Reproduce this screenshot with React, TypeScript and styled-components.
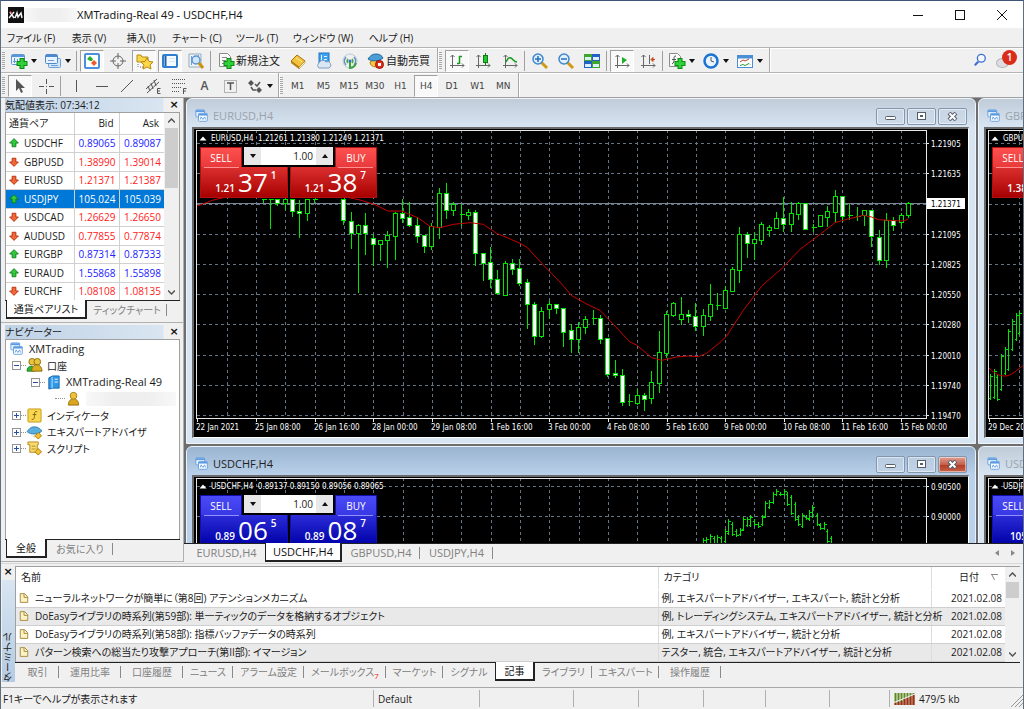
import React from "react";
import styled, { createGlobalStyle, css } from "styled-components";

const UI_FONT = `"Open Sans", "Noto Sans CJK JP", sans-serif`;
const CHART_FONT = `"DejaVu Sans Condensed", "DejaVu Sans", sans-serif`;

const Global = createGlobalStyle`
  *, *::before, *::after { box-sizing: border-box; }
  html, body { margin: 0; padding: 0; }
  body {
    font-family: ${UI_FONT};
    font-size: 10px;
    line-height: 16px;
    color: #1a1a1a;
    background: #f0f0f0;
    font-feature-settings: "palt";
    overflow: hidden;
  }
  button, input { font: inherit; color: inherit; font-feature-settings: inherit; }
  button { border: 0; padding: 0; background: none; white-space: nowrap; cursor: default; }
  ul { list-style: none; margin: 0; padding: 0; }
`;

/* ------------------------------------------------------------------ icons */

const ICONS: Record<string, React.ReactNode> = {
  newChart: (
    <>
      <rect x="0.500" y="1.500" width="13" height="10" rx="1" fill="#e8f3ff" stroke="#5b96d6" />
      <path d="M1 3h12" stroke="#5b96d6" strokeWidth="2" />
      <path d="M3.500 5v5M2 8.500h3M6.500 6v3" stroke="#5b96d6" />
      <path d="M11 5v11M5.500 10.500h11" stroke="#0b8a14" strokeWidth="5" />
      <path d="M11 6v9M6.500 10.500h9" stroke="#2fd03a" strokeWidth="3" />
    </>
  ),
  profiles: (
    <>
      <rect x="3.500" y="5.500" width="12" height="9" rx="1" fill="#d3e6fa" stroke="#6a9fd8" />
      <rect x="0.500" y="1.500" width="12" height="9" rx="1" fill="#e8f3ff" stroke="#4d8acb" />
      <path d="M1 3h11" stroke="#4d8acb" strokeWidth="2" />
      <path d="M3 7.500h6M6 12.500h7" stroke="#6a9fd8" />
    </>
  ),
  market: (
    <>
      <rect x="1" y="1" width="14" height="14" rx="1" fill="#fff" stroke="#4a90dc" strokeWidth="2" />
      <path d="M3 6l3-3 3 3-1 2H6z" fill="#22b12c" />
      <path d="M7 10l3-3 3 3-3 3z" fill="#ee5a28" />
    </>
  ),
  crosshair: (
    <g stroke="#666" fill="none">
      <circle cx="8" cy="8" r="5" />
      <path d="M8 0v6M8 10v6M0 8h6M10 8h6" />
    </g>
  ),
  navigator: (
    <>
      <path d="M1 2h4l1 2h6v5H1z" fill="#f7d74c" stroke="#b88a10" />
      <path d="M2 11v4M4 14h3" stroke="#777" strokeDasharray="1 1" />
      <path d="M11 5l2 3.500 4 .5-3 3 1 4-4-2-4 2 1-4-3-3 4-.5z" fill="#ffd84a" stroke="#b8860b" />
    </>
  ),
  terminal: (
    <>
      <rect x="1" y="2" width="14" height="12" rx="1" fill="#f5faff" stroke="#2f7fd0" strokeWidth="2" />
      <path d="M3.500 3v10" stroke="#1b5fae" strokeWidth="2" />
      <path d="M7 5.500h6M7 8.500h6" stroke="#d6e6f6" />
    </>
  ),
  tester: (
    <>
      <path d="M1 1h12v13H1z" fill="#eef3f8" stroke="#9ab" />
      <path d="M3.500 3v9M10.500 2v3" stroke="#6a9fd8" />
      <circle cx="8" cy="7" r="4" fill="#cfe6fb" stroke="#5c93cc" strokeWidth="1.500" />
      <path d="M11 10l4 5" stroke="#c9930d" strokeWidth="3" />
    </>
  ),
  order: (
    <>
      <path d="M1.500 .5h8l3 3v10h-11z" fill="#fafafa" stroke="#8c8c8c" />
      <path d="M4 4.500h5M4 7.500h4M4 10.500h3" stroke="#888" />
      <path d="M11 5v11M5.500 10.500h11" stroke="#0b8a14" strokeWidth="5" />
      <path d="M11 6v9M6.500 10.500h9" stroke="#2fd03a" strokeWidth="3" />
    </>
  ),
  book: (
    <>
      <path d="M1 8l6-6 8 6-6 6z" fill="#f3c23c" stroke="#a8720b" />
      <path d="M1 8l8 6v2L1 10z" fill="#b97c12" />
      <path d="M9 14l6-6v2l-6 6z" fill="#fff3c4" stroke="#a8720b" strokeWidth=".5" />
      <path d="M6 5l6 4" stroke="#fde79a" />
    </>
  ),
  cloud: (
    <>
      <rect x="3" y="0" width="10" height="10" fill="#3fa2f0" stroke="#1f73c4" />
      <path d="M5.500 2v6M8 3.500h3M8 6.500h3" stroke="#e3f3ff" />
      <path d="M3 15a3 3 0 010-5 4 4 0 017-1 3 3 0 013 6z" fill="#dce7f4" stroke="#7f9fc4" />
    </>
  ),
  signal: (
    <g fill="none">
      <circle cx="8" cy="8" r="7" stroke="#b9c9d8" />
      <path d="M4 12a6 6 0 010-8M12 4a6 6 0 010 8" stroke="#5f8fc0" strokeWidth="1.500" />
      <path d="M6 10a3 3 0 010-4M10 6a3 3 0 010 4" stroke="#4aa04f" strokeWidth="1.500" />
      <circle cx="8" cy="8" r="1.500" fill="#2a6fc0" />
      <path d="M8 9v6a7 7 0 006-5" stroke="#3aa342" strokeWidth="2" />
    </g>
  ),
  expert: (
    <>
      <path d="M2 9c0 6 10 7 12 0l-6-3z" fill="#f6c945" stroke="#b0830f" />
      <path d="M0 6c2-3 4-5 8-5s6 2 7 4c-3 3-11 4-15 1z" fill="#4a9ed6" stroke="#24679c" />
      <circle cx="11.500" cy="11.500" r="4" fill="#e02b17" stroke="#a01205" />
      <rect x="10" y="10" width="3" height="3" fill="#fff" />
    </>
  ),
  bars: (
    <g fill="none" stroke="#666">
      <path d="M3.500 2v13M1 12.500h14" />
      <path d="M1.500 4l2-2 2 2M13 10.500l2 2-2 2" />
      <path d="M10.500 3v8M10 3.500h3M8 10.500h2" stroke="#159a1c" strokeWidth="1.500" />
    </g>
  ),
  candles: (
    <g fill="none" stroke="#666">
      <path d="M3.500 2v13M1 12.500h14" />
      <path d="M1.500 4l2-2 2 2M13 10.500l2 2-2 2" />
      <path d="M10.500 0v12" stroke="#0c7d12" />
      <rect x="8.500" y="2.500" width="4" height="7" fill="#25c52e" stroke="#0c7d12" />
    </g>
  ),
  line: (
    <g fill="none" stroke="#666">
      <path d="M3.500 2v13M1 12.500h14" />
      <path d="M1.500 4l2-2 2 2M13 10.500l2 2-2 2" />
      <path d="M4 9c2-4 3-5 5-4s3 4 6 4" stroke="#159a1c" strokeWidth="1.500" />
    </g>
  ),
  zoomIn: (
    <>
      <path d="M9 9l6 6" stroke="#d19a15" strokeWidth="3" />
      <circle cx="6" cy="6" r="5" fill="#dff0ff" stroke="#3f86cf" strokeWidth="1.500" />
      <path d="M6 3v6M3 6h6" stroke="#2a6eb8" strokeWidth="1.500" />
    </>
  ),
  zoomOut: (
    <>
      <path d="M9 9l6 6" stroke="#d19a15" strokeWidth="3" />
      <circle cx="6" cy="6" r="5" fill="#dff0ff" stroke="#3f86cf" strokeWidth="1.500" />
      <path d="M3 6h6" stroke="#2a6eb8" strokeWidth="1.500" />
    </>
  ),
  tile: (
    <>
      <path d="M0 1h8v7H0zM8 8h8v7H8z" fill="#3fa52e" />
      <path d="M8 1h8v7H8zM0 8h8v7H0z" fill="#2361c4" />
      <path d="M1 4h6v3H1zM9 4h6v3H9zM1 11h6v3H1zM9 11h6v3H9z" fill="#dfeeff" />
    </>
  ),
  autoScroll: (
    <g fill="none" stroke="#666">
      <path d="M3.500 2v13M1 12.500h14" />
      <path d="M1.500 4l2-2 2 2M13 10.500l2 2-2 2" />
      <path d="M8 4l5 3-5 4z" fill="#1fae27" stroke="none" />
    </g>
  ),
  shift: (
    <g fill="none" stroke="#666">
      <path d="M3.500 2v13M1 12.500h14" />
      <path d="M1.500 4l2-2 2 2M13 10.500l2 2-2 2M9.500 2v9" />
      <path d="M15 6.500h-3M13 4.500l-2 2 2 2z" fill="#c8471d" stroke="#c8471d" />
    </g>
  ),
  indicator: (
    <>
      <path d="M.5 .5h8l3 3v10H.5z" fill="#fafafa" stroke="#8c8c8c" />
      <path d="M7 3c-2 0-2 1-2 3s0 4-2 5M3 6.500h4" fill="none" stroke="#555" />
      <path d="M11 5v11M5.500 10.500h11" stroke="#0b8a14" strokeWidth="5" />
      <path d="M11 6v9M6.500 10.500h9" stroke="#2fd03a" strokeWidth="3" />
    </>
  ),
  clock: (
    <>
      <circle cx="8" cy="8" r="6.500" fill="#e9f4ff" stroke="#1b74d2" strokeWidth="2.500" />
      <path d="M8 4v4l3 1" fill="none" stroke="#555" />
    </>
  ),
  template: (
    <>
      <rect x=".5" y="2.500" width="15" height="12" fill="#fff" stroke="#4a8fd6" />
      <path d="M1 4h14" stroke="#4a8fd6" strokeWidth="3" />
      <path d="M3 9l3-2 2 1 4-2" fill="none" stroke="#b5432c" />
      <path d="M3 12.500l3-1 2 1 4-2 1 1" fill="none" stroke="#2c9b38" />
    </>
  ),
  arrow: <path d="M4 1v12l3-3 2 5 2-1-2-4h4z" fill="#555" />,
  cross: <path d="M8.500 1v5M8.500 11v5M1 8.500h5M11 8.500h5M8 8.500h1" stroke="#555" />,
  vline: <path d="M8.500 2v12" stroke="#555" />,
  hline: <path d="M2 8.500h12" stroke="#555" />,
  trend: <path d="M2 14L14 2" stroke="#555" />,
  channel: (
    <g stroke="#555" fill="none">
      <path d="M1 11L12 1M2 15L14 4M3 8l2 5M6 5l2 6M9 2l2 6" />
      <path d="M15.500 10.500h-3v5h3M12 13h3" />
    </g>
  ),
  fibo: (
    <g stroke="#555" fill="none">
      <path d="M1 1.500h13M1 5.500h13M1 9.500h10M1 13.500h8" strokeDasharray="1 1" />
      <path d="M15.500 10.500h-3v5.500M12 13h3" />
    </g>
  ),
  textBox: (
    <>
      <rect x="2.500" y="2.500" width="12" height="12" fill="none" stroke="#777" strokeDasharray="1 1" />
      <path d="M5 5h7M8.500 5v7" stroke="#555" strokeWidth="1.500" />
    </>
  ),
  shapes: (
    <g fill="#555">
      <path d="M1 5l3-3 3 3-3 3zM9 12l3-3 3 3-3 3z" />
      <path d="M4 9l2 3 3 0M8 6l2 2 3-4" fill="none" stroke="#555" strokeWidth="1.500" />
    </g>
  ),
  search: (
    <>
      <path d="M6 10l-4 4" stroke="#3c6fd0" strokeWidth="2.500" />
      <circle cx="9.500" cy="6" r="4.500" fill="#f4f9ff" stroke="#3c6fd0" strokeWidth="1.500" />
    </>
  ),
  chartWindow: (
    <>
      <rect x="1" y="1" width="10" height="8" rx="1" fill="#eaf4ff" stroke="#5b9ae0" />
      <path d="M1 2.500h10" stroke="#5b9ae0" strokeWidth="2" />
      <rect x="4" y="5" width="10" height="9" rx="1" fill="#fff" stroke="#5b9ae0" />
      <path d="M4 6.500h10" stroke="#5b9ae0" strokeWidth="2" />
      <path d="M6 12l1-3 2 3 2-3 1 3" fill="none" stroke="#5b9ae0" />
    </>
  ),
  accounts: (
    <>
      <path d="M0 14c0-7 8-7 8 0z" fill="#30b336" stroke="#1c7d22" />
      <circle cx="5.500" cy="4" r="3.500" fill="#e8c441" stroke="#8f6c08" />
      <circle cx="11" cy="4" r="3.500" fill="#e8c441" stroke="#8f6c08" />
      <path d="M5 14c0-9 11-9 11 0z" fill="#d9ac22" stroke="#8f6c08" />
    </>
  ),
  server: (
    <>
      <path d="M3 3l4-2h7v13H7l-4 1z" fill="#2f97e8" stroke="#1668ae" />
      <path d="M6.500 2v12" stroke="#bfe2ff" />
      <path d="M9 4.500h4M9 7.500h4" stroke="#e6f5ff" />
    </>
  ),
  user: (
    <>
      <circle cx="8" cy="5" r="3.500" fill="#edc23a" stroke="#946d06" />
      <path d="M2.500 15c0-9 11-9 11 0z" fill="#d9a61c" stroke="#946d06" />
      <circle cx="8" cy="5" r="3" fill="#edc23a" />
    </>
  ),
  func: (
    <>
      <rect x="1" y="1" width="14" height="14" rx="1" fill="#f8d650" stroke="#c49a18" />
      <path d="M11 4c-3-1-3 1-3 4s-1 5-3 4M6 7h4" fill="none" stroke="#7a5a06" />
    </>
  ),
  advisor: (
    <>
      <path d="M0 7c2-2 3-5 8-5s6 3 8 4c-3 4-12 5-16 1z" fill="#58aede" stroke="#2a76ac" />
      <path d="M4 10c2 2 5 2 7 0l-3 4z" fill="#f0d9b0" />
      <path d="M12 8l3.500 3.500L12 15l-3.500-3.500z" fill="#f1c232" stroke="#a87a0c" />
    </>
  ),
  script: (
    <>
      <path d="M1 1h11v3h-1v8H3V4H1z" fill="#f8dc71" stroke="#b5881a" />
      <path d="M5 5.500h4M5 8.500h4" stroke="#b5881a" />
      <path d="M12 8l3.500 3.500L12 15l-3.500-3.500z" fill="#f1c232" stroke="#a87a0c" />
    </>
  ),
  up: <path d="M8 1l7 7-4 0v6H5V8H1z" fill="#32c83c" stroke="#0c7f18" strokeWidth="1.500" />,
  down: <path d="M8 15L1 8h4V2h6v6h4z" fill="#f0683a" stroke="#b8300c" strokeWidth="1.500" />,
  doc: (
    <>
      <path d="M2 1h7l5 5v9H2z" fill="#fbf3c8" stroke="#a8873a" strokeWidth="1.500" />
      <path d="M8 1v6h6" fill="none" stroke="#a8873a" strokeWidth="1.500" />
    </>
  ),
};

const IconSvg = styled.svg`
  display: block;
  flex: none;
  overflow: visible;
`;

function Icon({ name, size = 16 }: { name: string; size?: number }) {
  return (
    <IconSvg width={size} height={size} viewBox="0 0 16 16" aria-hidden="true">
      {ICONS[name]}
    </IconSvg>
  );
}

/* ------------------------------------------------------------------ frame */

const Frame = styled.div`
  display: flex;
  flex-direction: column;
  height: 100vh;
  border: 1px solid #5f6f7d;
  border-top-color: #3c5478;
  border-bottom: 0;
  background: #f0f0f0;
  overflow: hidden;
`;

const TitleBar = styled.header`
  display: flex;
  align-items: center;
  height: 27px;
  flex: none;
  background: #fff;
  padding-left: 7px;
`;

const Redacted = styled.span<{ $w: number }>`
  width: ${(p) => p.$w}px;
  height: 14px;
  background: linear-gradient(90deg, #f8f8f8, #efefef 30%, #efefef 70%, #f8f8f8);
`;

const TitleText = styled.h1`
  margin: 0;
  flex: 1;
  font-size: 11px;
  font-weight: 400;
  font-family: "Noto Sans", "Noto Sans CJK JP", sans-serif;
`;

const WindowButton = styled.button`
  width: 42px;
  height: 27px;
  display: grid;
  place-items: center;
`;

const MenuBar = styled.nav`
  display: flex;
  flex: none;
  height: 19px;
`;

const MenuItem = styled.button<{ $w: number }>`
  width: ${(p) => p.$w}px;
  line-height: 18px;
  text-align: center;
`;

const ToolRow = styled.div`
  display: flex;
  flex: none;
  height: 25px;
  border-top: 1px solid #b4b4b4;
  box-shadow: inset 0 1px #fff;
`;

const ToolBar = styled.div`
  display: flex;
  align-items: center;
  height: 25px;
  padding-right: 2px;
  border-right: 1px solid #a8a8a8;
  box-shadow: 1px 0 #fff;
`;

const Grip = styled.span`
  flex: none;
  width: 3px;
  height: 18px;
  margin: 0 2px 0 1px;
  background: repeating-linear-gradient(#a6a6a6 0 1px, #f4f4f4 1px 2px);
`;

const ToolDivider = styled.span`
  width: 1px;
  height: 20px;
  margin: 0 2px 0 1px;
  background: #a0a0a0;
`;

const ToolGroup = styled.div<{ $w: number }>`
  display: flex;
  width: ${(p) => p.$w}px;
`;

const ToolButton = styled.button<{ $pressed?: boolean }>`
  flex: 1;
  display: flex;
  align-items: center;
  justify-content: center;
  gap: 2px;
  height: 22px;
  margin: 0 1px;
  border: 1px solid transparent;
  font-size: 11px;
  color: #222;
  ${(p) =>
    p.$pressed &&
    css`
      background: #f9f9f9;
      border-color: #a0a0a0 #fff #fff #a0a0a0;
    `}
`;

const FrameLabel = styled.span`
  font-family: "DejaVu Sans", sans-serif;
  font-size: 9px;
  color: #444;
`;

const LetterTool = styled.span`
  font-weight: 600;
  font-size: 12px;
  color: #555;
`;

const Caret = styled.span`
  width: 0;
  height: 0;
  margin-left: 2px;
  border: 3px solid transparent;
  border-top: 4px solid #111;
  border-bottom: 0;
`;

const ToolEnd = styled.div`
  display: flex;
  align-items: center;
  gap: 8px;
  margin-left: auto;
  padding-right: 6px;
`;

const Bubble = styled.span`
  position: relative;
  width: 22px;
  height: 20px;
  &::before {
    content: "";
    position: absolute;
    left: 1px;
    bottom: 2px;
    width: 13px;
    height: 10px;
    border-radius: 50%;
    background: #dedee2;
    border: 1px solid #b4b4ba;
  }
`;

const Count = styled.b`
  position: absolute;
  top: 0;
  right: 0;
  width: 15px;
  height: 15px;
  border-radius: 50%;
  background: #da2c1b;
  color: #fff;
  font-size: 10px;
  line-height: 15px;
  font-weight: 600;
  text-align: center;
`;

/* ------------------------------------------------------------ dock panels */

const Workspace = styled.main`
  display: flex;
  flex: 1;
  min-height: 0;
  border-top: 1px solid #a0a0a0;
`;

const Dock = styled.aside`
  display: flex;
  flex-direction: column;
  width: 183px;
  flex: none;
  gap: 2px;
  border-right: 1px solid #b0b0b0;
`;

const Panel = styled.section<{ $grow?: boolean }>`
  display: flex;
  flex-direction: column;
  min-height: 0;
  padding: 0 3px 2px 4px;
  border-bottom: 1px solid #b0b0b0;
  flex: ${(p) => (p.$grow ? "1" : "none")};
`;

const PanelTitle = styled.h2`
  display: flex;
  justify-content: space-between;
  align-items: center;
  margin: 0;
  height: 14px;
  font-size: 10px;
  line-height: 14px;
  font-weight: 400;
  background: linear-gradient(90deg, #bfd2e6, #d9e5f1 90%, #f0f0f0 91%);
`;

const CloseMark = styled.button`
  width: 12px;
  height: 12px;
  font: 700 11px/10px "DejaVu Sans", sans-serif;
  color: #111;
`;

const PanelBody = styled.div<{ $h?: number }>`
  display: flex;
  align-items: flex-start;
  overflow: hidden;
  background: #fff;
  border: 1px solid #a0a0a0;
  border-bottom: 0;
  ${(p) => (p.$h ? `height: ${p.$h}px;` : "flex: 1;")}
`;

const Scroll = styled.div`
  display: flex;
  flex-direction: column;
  align-items: center;
  align-self: stretch;
  justify-content: space-between;
  flex: none;
  width: 15px;
  background: #f0f0f0;
`;

const Thumb = styled.span<{ $h: number }>`
  width: 13px;
  height: ${(p) => p.$h}px;
  margin-bottom: auto;
  background: #cdcdcd;
`;

const ScrollArrow = styled.button`
  display: grid;
  place-items: center;
  width: 15px;
  height: 15px;
`;

const QuoteTable = styled.table`
  flex: 1;
  height: 100%;
  border-collapse: collapse;
  table-layout: fixed;
  th, td {
    padding: 0 3px 0 0;
    border: solid #d0d0d0;
    border-width: 0 0 1px 1px;
    text-align: right;
    font-weight: 400;
    overflow: hidden;
    white-space: nowrap;
    line-height: 16px;
  }
  th { height: 21px; padding-right: 5px; }
  th:first-child, td:first-child { text-align: left; border-left: 0; padding: 0 0 0 3px; }
  tr:last-child td { border-bottom: 0; }
`;

const QuoteRow = styled.tr<{ $up: boolean; $sel?: boolean }>`
  td { color: ${(p) => (p.$up ? "#2020ff" : "#ff2020")}; }
  td:first-child { color: #1a1a1a; }
  ${(p) =>
    p.$sel &&
    css`
      background: #0078d7;
      td, td:first-child { color: #fff; }
    `}
`;

const Pair = styled.span`
  display: flex;
  align-items: center;
  gap: 5px;
`;

const TabStrip = styled.div`
  display: flex;
  flex: none;
  height: 20px;
  padding-left: 1px;
  border-top: 1px solid #222;
`;

const Tab = styled.button<{ $w: number; $active?: boolean; $plain?: boolean }>`
  position: relative;
  width: ${(p) => p.$w}px;
  height: 18px;
  line-height: 16px;
  color: #808080;
  ${(p) =>
    p.$active
      ? css`
          margin-top: -1px;
          height: 19px;
          color: #111;
          background: #fff;
          border: solid #222;
          border-width: 0 2px 2px 1px;
        `
      : !p.$plain &&
        css`
          &::after {
            content: "";
            position: absolute;
            right: 0;
            top: 3px;
            height: 12px;
            border-right: 1px solid #8a8a8a;
          }
        `}
`;

const Tree = styled.ul`
  display: grid;
  grid-template-rows: repeat(7, 1fr);
  height: 117px;
  flex: 1;
  padding: 1px 0 0 3px;
`;

const TreeRow = styled.li<{ $depth: number }>`
  display: flex;
  align-items: center;
  gap: 5px;
  margin-left: ${(p) => p.$depth}px;
  white-space: nowrap;
`;

const TreeLink = styled.span<{ $w: number }>`
  width: ${(p) => p.$w}px;
  margin-right: -4px;
  height: 1px;
  border-top: 1px dotted #909090;
`;

const Expander = styled.button`
  display: grid;
  place-items: center;
  width: 9px;
  height: 9px;
  margin-right: -5px;
  border: 1px solid #949494;
  background: #fff;
`;

const TreeName = styled.span<{ $latin: boolean }>`
  display: flex;
  font-size: ${(p) => (p.$latin ? 11 : 10)}px;
`;

/* ------------------------------------------------------------ MDI windows */

const ChartArea = styled.div`
  display: flex;
  flex-direction: column;
  flex: 1;
  min-width: 0;
`;

const Desktop = styled.div`
  flex: 1;
  min-height: 0;
  overflow: hidden;
  display: grid;
  grid-template-columns: max-content max-content;
  align-content: start;
  gap: 2px;
  padding-left: 1px;
  border-left: 1px solid #6e6e6e;
  background: #6e6e6e;
`;

const MdiWindow = styled.section<{ $active?: boolean }>`
  padding: 0 6px 5px 5px;
  border: 1px solid ${(p) => (p.$active ? "#e8f2fb" : "#eef4fa")};
  border-radius: 6px 6px 0 0;
  background: ${(p) =>
    p.$active
      ? "linear-gradient(#9ab3cf, #b9d1ea 28px, #b9d1ea)"
      : "linear-gradient(#c0ccd8, #d7e4f2 28px, #d7e4f2)"};
`;

const MdiTitle = styled.header<{ $active?: boolean }>`
  display: flex;
  align-items: center;
  gap: 4px;
  height: 28px;
  padding: 6px 0 0 3px;
  font-size: 11px;
  color: ${(p) => (p.$active ? "#222" : "#9aa3ac")};
`;

const MdiName = styled.h3`
  flex: 1;
  margin: 0;
  font: inherit;
`;

const MdiButtons = styled.div`
  display: flex;
  gap: 2px;
  margin-right: 2px;
`;

const MdiButton = styled.button<{ $red?: boolean }>`
  display: grid;
  place-items: center;
  width: 29px;
  height: 17px;
  border: 1px solid #8296ae;
  border-radius: 2px;
  box-shadow: inset 0 0 0 1px rgba(255, 255, 255, 0.5);
  background: ${(p) => (p.$red ? "linear-gradient(#e0a193, #c4604c 50%, #b23a22 51%, #c9614a)" : "rgba(200, 214, 229, 0.6)")};
`;

const ChartPane = styled.div`
  position: relative;
  border: solid;
  border-width: 2px 1px 1px 2px;
  border-color: #6a6a6a #fff #fff #6a6a6a;
  background: #000;
`;

const ChartSvg = styled.svg`
  display: block;
  text { font-family: ${CHART_FONT}; font-size: 8px; fill: #fff; }
  text.inverse { fill: #000; }
`;

/* one-click trading panel lying over the chart */
const DealPanel = styled.div`
  position: absolute;
  left: 6px;
  top: 18px;
  width: 177px;
  display: grid;
  grid-template-columns: 42px 1fr 42px;
  background: #000;
`;

const dealFill = {
  red: { top: "linear-gradient(#ff5050, #e83a3a)", bottom: "linear-gradient(#dc3030, #a80000)", edge: "#b01010", rule: "#ff9090" },
  blue: { top: "linear-gradient(#4a4af6, #3838e4)", bottom: "linear-gradient(#2c2cd8, #0000a8)", edge: "#1010b0", rule: "#9090ff" },
};
type Tone = keyof typeof dealFill;

const DealSide = styled.button<{ $tone: Tone }>`
  height: 20px;
  line-height: 16px;
  color: #fff;
  border: solid ${(p) => dealFill[p.$tone].edge};
  border-width: 1px 1px 0;
  background: ${(p) => dealFill[p.$tone].top};
`;

const Volume = styled.label`
  display: flex;
  align-items: stretch;
  height: 18px;
  margin: 0 2px;
  background: #fff;
`;

const VolumeInput = styled.input`
  flex: 1;
  min-width: 0;
  width: 0;
  border: 0;
  padding: 0 3px;
  text-align: right;
  color: #222;
  background: #fff;
  outline: 0;
`;

const Stepper = styled.button`
  display: grid;
  place-items: center;
  width: 17px;
  background: #e8e8e8;
`;

const Prices = styled.div`
  grid-column: 1 / -1;
  display: grid;
  grid-template-columns: 1fr 1fr;
  gap: 2px;
`;

const Price = styled.button<{ $tone: Tone }>`
  position: relative;
  display: flex;
  justify-content: flex-end;
  align-items: baseline;
  gap: 3px;
  height: 31px;
  padding-right: 10px;
  color: #fff;
  border: solid ${(p) => dealFill[p.$tone].edge};
  border-width: 0 1px 1px;
  background: ${(p) => dealFill[p.$tone].bottom};
  &::before {
    content: "";
    position: absolute;
    top: 0;
    left: 3px;
    width: 35px;
    border-top: 1px solid ${(p) => dealFill[p.$tone].rule};
  }
  &:last-child::before { left: auto; right: 3px; }
  small { font-size: 10px; font-weight: 600; }
  strong { font-size: 26px; line-height: 30px; font-weight: 400; }
  sup { font-size: 10px; line-height: 10px; font-weight: 600; align-self: flex-start; margin-top: 3px; }
`;

/* ---------------------------------------------------------------- charting */

const PLOT = { w: 774, h: 308, left: 3, top: 1, right: 732, bottom: 289 };
const GRID_X = Array.from({ length: 24 }, (_, i) => Math.round(32.7 + i * 29.32));

// [bar index, high, low, body top, body bottom, falling?]; heights in thirds of a pixel
type Candle = [number, number, number, number, number, number];
const EURUSD: Candle[] = [
  [-27, 310, 317, 310, 310, 0], [-26, 310, 396, 310, 310, 0], [-25, 310, 326, 310, 320, 1], [-24, 310, 338, 310, 322, 0],
  [-23, 310, 360, 310, 346, 1], [-22, 310, 423, 344, 350, 1], [-21, 310, 372, 310, 352, 0], [-20, 310, 317, 310, 310, 0],
  [-16, 310, 384, 310, 373, 1], [-15, 345, 456, 375, 412, 1], [-14, 382, 588, 388, 412, 0], [-13, 349, 473, 388, 410, 1],
  [-12, 412, 508, 427, 445, 1], [-11, 431, 491, 431, 444, 0], [-10, 402, 514, 418, 431, 0], [-9, 346, 489, 352, 419, 0],
  [-8, 305, 377, 352, 365, 1], [-7, 314, 390, 363, 388, 1], [-6, 359, 437, 386, 419, 1], [-5, 418, 467, 418, 451, 1],
  [-4, 378, 459, 391, 451, 0], [-3, 273, 425, 292, 392, 0], [-2, 259, 366, 292, 341, 1], [-1, 316, 357, 324, 341, 0],
  [0, 322, 387, 355, 355, 0], [1, 335, 369, 348, 357, 0], [2, 339, 506, 347, 470, 1], [3, 468, 552, 471, 500, 1],
  [4, 449, 574, 499, 548, 1], [5, 519, 594, 550, 591, 1], [6, 492, 596, 502, 596, 0], [7, 486, 534, 502, 518, 1],
  [8, 486, 568, 517, 560, 1], [9, 547, 696, 557, 623, 1], [10, 615, 745, 623, 719, 1], [11, 629, 724, 645, 720, 0],
  [12, 613, 667, 625, 640, 0], [13, 621, 652, 625, 636, 1], [14, 634, 750, 637, 708, 1], [15, 682, 767, 702, 729, 1],
  [16, 675, 769, 693, 728, 0], [17, 657, 712, 669, 692, 0], [18, 639, 684, 666, 666, 0], [19, 654, 741, 666, 728, 1],
  [20, 725, 839, 727, 833, 1], [21, 790, 842, 831, 837, 1], [22, 816, 927, 836, 917, 1], [23, 892, 927, 916, 916, 0],
  [24, 877, 923, 897, 921, 0], [25, 889, 942, 897, 908, 1], [26, 822, 921, 859, 907, 0], [27, 701, 888, 768, 862, 0],
  [28, 641, 784, 655, 772, 0], [29, 614, 659, 622, 656, 0], [30, 600, 684, 655, 670, 0], [31, 639, 678, 655, 661, 1],
  [32, 618, 703, 660, 689, 1], [33, 635, 717, 658, 689, 0], [34, 561, 673, 625, 659, 0], [35, 588, 638, 626, 626, 0],
  [36, 568, 637, 583, 635, 0], [37, 510, 585, 520, 585, 0], [38, 391, 557, 415, 521, 0], [39, 406, 484, 414, 442, 1],
  [40, 404, 488, 430, 442, 0], [41, 374, 443, 383, 431, 0], [42, 383, 419, 394, 402, 0], [43, 346, 395, 367, 395, 0],
  [44, 301, 404, 367, 384, 1], [45, 314, 404, 352, 384, 0], [46, 316, 370, 320, 353, 0], [47, 320, 398, 320, 398, 1],
  [48, 381, 404, 392, 392, 0], [49, 354, 391, 358, 391, 0], [50, 327, 391, 346, 362, 0], [51, 280, 378, 301, 349, 0],
  [52, 297, 376, 300, 360, 1], [53, 322, 370, 357, 357, 0], [54, 330, 371, 359, 359, 0], [55, 341, 388, 343, 358, 0],
  [56, 340, 450, 342, 419, 1], [57, 400, 503, 422, 491, 1], [58, 349, 512, 371, 491, 0], [59, 360, 403, 371, 386, 1],
  [60, 349, 392, 358, 379, 0], [61, 316, 362, 320, 358, 0],
];

const EUR_MA: [number, number][] = [
  [37, 330], [85, 312], [180, 290], [420, 290], [525, 312], [570, 326], [608, 345], [650, 345], [700, 366], [735, 391],
  [765, 395], [805, 385], [855, 380], [895, 385], [935, 412], [980, 431], [1005, 442], [1027, 455], [1075, 507],
  [1125, 558], [1160, 599], [1205, 624], [1245, 643], [1285, 685], [1335, 738], [1355, 747], [1400, 785], [1430, 793],
  [1475, 783], [1510, 780], [1540, 782], [1565, 772], [1605, 739], [1625, 720], [1675, 643], [1730, 570], [1790, 518],
  [1845, 460], [1895, 423], [1950, 380], [1985, 370], [2035, 358], [2060, 363], [2080, 371], [2145, 375], [2160, 374], [2170, 368],
];

// [x, high, low] of each bar, in thirds of a pixel
const USDCHF: [number, number, number][] = [
  [188, 413, 440], [199, 410, 440], [210, 401, 440], [221, 408, 440], [232, 406, 440], [243, 407, 440], [255, 388, 430],
  [265, 358, 404], [276, 367, 407], [287, 387, 411], [299, 385, 408], [310, 352, 392], [321, 350, 381], [331, 344, 382],
  [343, 357, 379], [354, 365, 383], [365, 345, 377], [376, 302, 354], [386, 299, 326], [398, 275, 312], [409, 267, 289],
  [420, 276, 289], [431, 268, 288], [442, 275, 318], [453, 284, 344], [464, 306, 363], [475, 345, 377], [486, 340, 384],
  [497, 344, 359], [508, 330, 364], [517, 315, 355], [530, 338, 379], [540, 368, 390], [551, 366, 391], [562, 386, 430],
  [574, 408, 440],
];

// [x, high, low] in pixels
const GBPUSD: [number, number, number][] = [
  [4, 245, 271], [8, 240, 270], [11, 246, 272], [15, 225, 262], [19, 218, 246], [22, 200, 242], [26, 190, 222],
  [30, 184, 212], [33, 182, 206],
];

const GREEN = "#00e600";

function CandleSeries() {
  return (
    <g stroke={GREEN} shapeRendering="crispEdges">
      {EURUSD.map(([k, hi, lo, top, bottom, falling]) => {
        const x = Math.round(266.8 + k * 7.333) + 0.5;
        const y = (v: number) => Math.round(v / 3 - 33) + 0.5;
        const body = y(bottom) - y(top);
        return (
          <g key={k}>
            <path d={`M${x} ${y(hi)}V${y(lo)}`} />
            {body > 0 ? (
              <rect x={x - 2} y={y(top)} width={4} height={body} fill={falling ? "#fff" : "#000"} />
            ) : (
              <path d={`M${x - 2} ${y(top)}h5`} />
            )}
          </g>
        );
      })}
    </g>
  );
}

function BarSeries({ bars }: { bars: [number, number, number][] }) {
  return (
    <g stroke={GREEN} shapeRendering="crispEdges">
      {bars.map(([x, hi, lo], i) => {
        const px = Math.round(x) + 0.5;
        const up = i === 0 || hi < bars[i - 1][1];
        const open = Math.round(up ? lo - 2 : hi + 2) + 0.5;
        const close = Math.round(up ? hi + 2 : lo - 2) + 0.5;
        return <path key={x} d={`M${px} ${hi}V${lo}M${px - 2} ${open}h2M${px} ${close}h2`} />;
      })}
    </g>
  );
}

type ChartProps = {
  header: string;
  gridTop: number;
  prices: string[];
  dates: string[];
  current?: { y: number; text: string };
  children?: React.ReactNode;
};

function Chart({ header, gridTop, prices, dates, current, children }: ChartProps) {
  const rows = Array.from({ length: 10 }, (_, i) => Math.round(gridTop + i * 30.2) + 0.5).filter((y) => y < PLOT.bottom);
  return (
    <ChartSvg width={PLOT.w} height={PLOT.h} viewBox={`0 0 ${PLOT.w} ${PLOT.h}`} role="img" aria-label={header}>
      <g stroke="#647484" strokeDasharray="3 3" shapeRendering="crispEdges">
        {GRID_X.map((x) => (
          <path key={x} d={`M${x + 0.5} ${PLOT.top}V${PLOT.bottom}`} />
        ))}
        {rows.map((y) => (
          <path key={y} d={`M${PLOT.left} ${y}H${PLOT.right}`} />
        ))}
      </g>
      {current && <path d={`M${PLOT.left} ${current.y}.5H${PLOT.right}`} stroke="#778899" />}
      {children}
      <g fill="none" stroke="#e8e8e8" shapeRendering="crispEdges">
        <path d={`M${PLOT.left - 0.5} ${PLOT.bottom + 0.5}V${PLOT.top + 0.5}H${PLOT.right + 0.5}V${PLOT.bottom + 0.5}Z`} />
        {dates.map((d, i) => (
          <path key={d} d={`M${i ? GRID_X[i * 2 - 1] + 0.5 : 3.5} ${PLOT.bottom}v4`} />
        ))}
        {rows.map((y) => (
          <path key={y} d={`M${PLOT.right} ${y}h3`} />
        ))}
      </g>
      <path d="M5.500 11.500h7l-3.500-4z" fill="#fff" />
      <text x="17" y="12" xmlSpace="preserve">{header}</text>
      {dates.map((d, i) => (
        <text key={d} x={i ? GRID_X[i * 2 - 1] - 1 : 2} y="301">{d}</text>
      ))}
      {prices.map((p, i) => p && <text key={p} x="737" y={rows[i] + 3}>{p}</text>)}
      {current && (
        <>
          <rect x="733" y={current.y - 5} width="38" height="11" fill="#fff" />
          <text className="inverse" x="737" y={current.y + 4}>{current.text}</text>
        </>
      )}
    </ChartSvg>
  );
}

type Quote = [string, string, string];
type WindowProps = { name: string; active?: boolean; tone: Tone; sell: Quote; buy: Quote; children: React.ReactNode };

function ChartWindow({ name, active, tone, sell, buy, children }: WindowProps) {
  return (
    <MdiWindow $active={active}>
      <MdiTitle $active={active}>
        <Icon name="chartWindow" size={14} />
        <MdiName>{name}</MdiName>
        <MdiButtons>
          <MdiButton aria-label="最小化">
            <svg width="11" height="9"><rect x=".5" y="4.500" width="10" height="3" rx="1" fill="#fff" stroke="#555d68" /></svg>
          </MdiButton>
          <MdiButton aria-label="最大化">
            <svg width="11" height="9"><rect x="1.500" y=".5" width="8" height="7" fill="#fff" stroke="#555d68" /><rect x="4" y="3" width="3" height="2" fill="#555d68" /></svg>
          </MdiButton>
          <MdiButton aria-label="閉じる" $red={active}>
            <svg width="11" height="9"><path d="M2 1l7 7M9 1L2 8" stroke="#555d68" strokeWidth="4" /><path d="M2.500 1.500l6 6M8.500 1.500l-6 6" stroke="#fff" strokeWidth="2" /></svg>
          </MdiButton>
        </MdiButtons>
      </MdiTitle>
      <ChartPane>
        {children}
        <DealPanel>
          <DealSide $tone={tone}>SELL</DealSide>
          <Volume>
            <Stepper aria-label="減らす"><svg width="6" height="4"><path d="M0 0h6L3 4z" fill="#111" /></svg></Stepper>
            <VolumeInput aria-label="数量" defaultValue="1.00" />
            <Stepper aria-label="増やす"><svg width="6" height="4"><path d="M0 4h6L3 0z" fill="#111" /></svg></Stepper>
          </Volume>
          <DealSide $tone={tone}>BUY</DealSide>
          <Prices>
            {[sell, buy].map(([a, b, c]) => (
              <Price key={b} $tone={tone}><small>{a}</small><strong>{b}</strong><sup>{c}</sup></Price>
            ))}
          </Prices>
        </DealPanel>
      </ChartPane>
    </MdiWindow>
  );
}

const DocTabs = styled(TabStrip)`
  height: 19px;
  padding-left: 4px;
  border-top-color: #222;
  font-size: 11px;
`;

const DocScroll = styled.div`
  display: flex;
  gap: 12px;
  align-items: center;
  margin-left: auto;
  padding-right: 8px;
`;

/* ---------------------------------------------------------------- terminal */

const Terminal = styled.section`
  display: flex;
  flex: none;
  margin-top: 1px;
  padding: 2px 3px 5px 0;
  border-top: 1px solid #d8d8d8;
`;

const Spine = styled.header`
  display: flex;
  flex-direction: column;
  align-items: center;
  width: 14px;
  gap: 2px;
`;

const SpineTitle = styled.h2`
  flex: 1;
  width: 13px;
  margin: 0;
  writing-mode: vertical-rl;
  transform: rotate(180deg);
  font-size: 10px;
  line-height: 13px;
  font-weight: 400;
  background: linear-gradient(#b4cbe2, #d9e5f1);
`;

const TerminalBody = styled.div`
  flex: 1;
  min-width: 0;
`;

const ListBox = styled.div`
  display: flex;
  align-items: flex-start;
  background: #fff;
  border: solid #a0a0a0;
  border-width: 1px 0 0 1px;
  height: 96px;
  overflow: hidden;
`;

const Articles = styled.table`
  flex: 1;
  width: 100%;
  min-width: 0;
  border-collapse: collapse;
  table-layout: fixed;
  th, td {
    height: 18px;
    padding: 0 3px;
    border: solid #dcdcdc;
    border-width: 0 0 1px 1px;
    text-align: left;
    font-weight: 400;
    line-height: 17px;
    white-space: nowrap;
  }
  th { height: 22px; border-bottom-color: #fff; padding-left: 5px; }
  th:first-child, td:first-child { border-left: 0; }
  th:last-child, td:last-child { text-align: right; }
  tbody tr:nth-child(even) { background: #e9e9e9; }
  td { border-bottom-color: #cfcfcf; }
`;

const Doc = styled.span`
  display: flex;
  align-items: center;
  gap: 6px;
`;

const SortMark = styled.svg`
  margin: 0 4px 0 12px;
`;

const Unread = styled.sub`
  font-size: 8px;
  line-height: 0;
  color: #ff2020;
`;

const StatusBar = styled.footer`
  display: grid;
  grid-template-columns: 1fr 106px 94px 65px 65px 62px 64px 60px 134px;
  flex: none;
  height: 22px;
  padding-top: 2px;
  border-top: 1px solid #a8a8a8;
`;

const StatusCell = styled.div`
  display: flex;
  align-items: center;
  gap: 4px;
  padding-left: 4px;
  height: 17px;
  white-space: nowrap;
  & + & { border-left: 1px solid #b0b0b0; }
  &:first-child { padding-left: 2px; }
`;

const ResizeGrip = styled.svg`
  margin-left: auto;
  align-self: flex-end;
`;

/* ------------------------------------------------------------------- data */

const MENUS: [string, number][] = [
  ["ファイル (F)", 60], ["表示 (V)", 56], ["挿入(I)", 48], ["チャート (C)", 64], ["ツール (T)", 56], ["ウィンドウ (W)", 76], ["ヘルプ (H)", 60],
];

const QUOTES: [string, string, string, boolean][] = [
  ["USDCHF", "0.89065", "0.89087", true], ["GBPUSD", "1.38990", "1.39014", false], ["EURUSD", "1.21371", "1.21387", false],
  ["USDJPY", "105.024", "105.039", true], ["USDCAD", "1.26629", "1.26650", false], ["AUDUSD", "0.77855", "0.77874", false],
  ["EURGBP", "0.87314", "0.87333", true], ["EURAUD", "1.55868", "1.55898", true], ["EURCHF", "1.08108", "1.08135", false],
];

const ARTICLES = [
  ["ニューラルネットワークが簡単に（第8回) アテンションメカニズム", "例, エキスパートアドバイザー, エキスパート, 統計と分析"],
  ["DoEasyライブラリの時系列(第59部): 単一ティックのデータを格納するオブジェクト", "例, トレーディングシステム, エキスパートアドバイザー, 統計と分析"],
  ["DoEasyライブラリの時系列(第58部): 指標バッファデータの時系列", "例, エキスパートアドバイザー, 統計と分析"],
  ["パターン検索への総当たり攻撃アプローチ(第II部): イマージョン", "テスター, 統合, エキスパートアドバイザー, 統計と分析"],
];

const TERMINAL_TABS: [string, number][] = [
  ["取引", 43], ["運用比率", 62], ["口座履歴", 62], ["ニュース", 50], ["アラーム設定", 71], ["メールボックス", 82], ["マーケット", 57],
  ["シグナル", 52], ["記事", 40], ["ライブラリ", 57], ["エキスパート", 67], ["操作履歴", 62],
];

const TIMEFRAMES = ["M1", "M5", "M15", "M30", "H1", "H4", "D1", "W1", "MN"];

const EUR_PRICES = ["1.21905", "1.21635", "", "1.21095", "1.20825", "1.20550", "1.20280", "1.20010", "1.19740", "1.19470"];
const EUR_DATES = ["22 Jan 2021", "25 Jan 08:00", "26 Jan 16:00", "28 Jan 00:00", "29 Jan 08:00", "1 Feb 16:00", "3 Feb 00:00", "4 Feb 08:00", "5 Feb 16:00", "9 Feb 00:00", "10 Feb 08:00", "11 Feb 16:00", "15 Feb 00:00"];

function ScrollBar({ thumb }: { thumb: number }) {
  return (
    <Scroll>
      <ScrollArrow aria-label="上へ"><svg width="7" height="5"><path d="M0 4.500l3.500-3.500 3.500 3.500" fill="none" stroke="#555" strokeWidth="1.500" /></svg></ScrollArrow>
      <Thumb $h={thumb} />
      <ScrollArrow aria-label="下へ"><svg width="7" height="5"><path d="M0 .5l3.500 3.500L7 .5" fill="none" stroke="#555" strokeWidth="1.500" /></svg></ScrollArrow>
    </Scroll>
  );
}

function Tool({ icon, label, pressed, drop, children }: { icon?: string; label: string; pressed?: boolean; drop?: boolean; children?: React.ReactNode }) {
  return (
    <ToolButton aria-label={label} $pressed={pressed}>
      {icon && <Icon name={icon} />}
      {children}
      {drop && <Caret />}
    </ToolButton>
  );
}

type TreeNodeProps = { depth: number; icon: string; size?: number; link?: number; toggle?: "+" | "-"; latin?: boolean; children: React.ReactNode };

function TreeNode({ depth, icon, size = 15, link = 5, toggle, latin = false, children }: TreeNodeProps) {
  return (
    <TreeRow $depth={depth}>
      {toggle && (
        <Expander aria-label={toggle === "+" ? "開く" : "閉じる"}>
          <svg width="5" height="5"><path d={toggle === "+" ? "M0 2.500h5M2.500 0v5" : "M0 2.500h5"} stroke="#2a50a8" /></svg>
        </Expander>
      )}
      {link > 0 && <TreeLink $w={link} />}
      <Icon name={icon} size={size} />
      <TreeName $latin={latin}>{children}</TreeName>
    </TreeRow>
  );
}

/* -------------------------------------------------------------------- app */

export default function App() {
  return (
    <>
      <Global />
      <Frame>
        <TitleBar>
          <svg width="16" height="16" aria-hidden="true">
            <rect width="16" height="16" fill="#111" />
            <path d="M2 5l4 6M6 5l-5 6M7 11l2-5 1 4 3-4 1 5" stroke="#f4f4f4" strokeWidth="1.500" fill="none" />
            <path d="M2 4l2 3" stroke="#d33" />
          </svg>
          <Redacted $w={53} />
          <TitleText>XMTrading-Real 49 - USDCHF,H4</TitleText>
          <WindowButton aria-label="最小化"><svg width="10" height="10"><path d="M0 5.500h10" stroke="#111" /></svg></WindowButton>
          <WindowButton aria-label="最大化"><svg width="10" height="10"><rect x=".5" y=".5" width="9" height="9" fill="none" stroke="#111" /></svg></WindowButton>
          <WindowButton aria-label="閉じる"><svg width="10" height="10"><path d="M0 0l10 10M10 0L0 10" stroke="#111" /></svg></WindowButton>
        </TitleBar>

        <MenuBar>
          {MENUS.map(([m, w]) => <MenuItem key={m} $w={w}>{m}</MenuItem>)}
        </MenuBar>

        <ToolRow>
          <ToolBar>
            <Grip />
            <ToolGroup $w={68}>
              <Tool icon="newChart" label="新規チャート" drop />
              <Tool icon="profiles" label="チャートの組表示" drop />
            </ToolGroup>
            <ToolDivider />
            <ToolGroup $w={130}>
              <Tool icon="market" label="気配値表示" pressed />
              <Tool icon="crosshair" label="データウィンドウ" />
              <Tool icon="navigator" label="ナビゲーター" pressed />
              <Tool icon="terminal" label="ターミナル" pressed />
              <Tool icon="tester" label="ストラテジーテスター" />
            </ToolGroup>
            <ToolDivider />
            <ToolGroup $w={72}><Tool icon="order" label="新規注文">新規注文</Tool></ToolGroup>
            <ToolGroup $w={78}>
              <Tool icon="book" label="MetaEditor" />
              <Tool icon="cloud" label="VPS" />
              <Tool icon="signal" label="シグナル" />
            </ToolGroup>
            <ToolGroup $w={72}><Tool icon="expert" label="自動売買">自動売買</Tool></ToolGroup>
          </ToolBar>
          <ToolBar>
            <Grip />
            <ToolGroup $w={79}>
              <Tool icon="bars" label="バーチャート" pressed />
              <Tool icon="candles" label="ローソク足" />
              <Tool icon="line" label="ラインチャート" />
            </ToolGroup>
            <ToolDivider />
            <ToolGroup $w={78}>
              <Tool icon="zoomIn" label="拡大" />
              <Tool icon="zoomOut" label="縮小" />
              <Tool icon="tile" label="整列" />
            </ToolGroup>
            <ToolDivider />
            <ToolGroup $w={52}>
              <Tool icon="autoScroll" label="自動スクロール" pressed />
              <Tool icon="shift" label="チャートシフト" />
            </ToolGroup>
            <ToolDivider />
            <ToolGroup $w={102}>
              <Tool icon="indicator" label="インディケータ" drop />
              <Tool icon="clock" label="時間足設定" drop />
              <Tool icon="template" label="定型チャート" drop />
            </ToolGroup>
          </ToolBar>
          <ToolEnd>
            <Icon name="search" size={14} />
            <Bubble><Count>1</Count></Bubble>
          </ToolEnd>
        </ToolRow>

        <ToolRow>
          <ToolBar>
            <Grip />
            <ToolGroup $w={52}>
              <Tool icon="arrow" label="カーソル" pressed />
              <Tool icon="cross" label="十字カーソル" />
            </ToolGroup>
            <ToolDivider />
            <ToolGroup $w={180}>
              <Tool icon="vline" label="垂直線" />
              <Tool icon="hline" label="水平線" />
              <Tool icon="trend" label="トレンドライン" />
              <Tool icon="channel" label="チャネル" />
              <Tool icon="fibo" label="フィボナッチ" />
              <Tool label="テキスト"><LetterTool>A</LetterTool></Tool>
              <Tool icon="textBox" label="テキストラベル" />
            </ToolGroup>
            <ToolGroup $w={33}><Tool icon="shapes" label="矢印" drop /></ToolGroup>
          </ToolBar>
          <ToolBar>
            <Grip />
            <ToolGroup $w={231}>
              {TIMEFRAMES.map((t) => (
                <Tool key={t} label={t} pressed={t === "H4"}><FrameLabel>{t}</FrameLabel></Tool>
              ))}
            </ToolGroup>
          </ToolBar>
        </ToolRow>

        <Workspace>
          <Dock>
            <Panel>
              <PanelTitle>気配値表示: 07:34:12<CloseMark aria-label="閉じる">×</CloseMark></PanelTitle>
              <PanelBody $h={188}>
                <QuoteTable>
                  <colgroup><col /><col width={45} /><col width={45} /></colgroup>
                  <thead><tr><th>通貨ペア</th><th>Bid</th><th>Ask</th></tr></thead>
                  <tbody>
                    {QUOTES.map(([s, bid, ask, up]) => (
                      <QuoteRow key={s} $up={up} $sel={s === "USDJPY"}>
                        <td><Pair><Icon name={up ? "up" : "down"} size={10} />{s}</Pair></td>
                        <td>{bid}</td>
                        <td>{ask}</td>
                      </QuoteRow>
                    ))}
                  </tbody>
                </QuoteTable>
                <ScrollBar thumb={60} />
              </PanelBody>
              <TabStrip>
                <Tab $w={81} $active>通貨ペアリスト</Tab>
                <Tab $w={80}>ティックチャート</Tab>
              </TabStrip>
            </Panel>
            <Panel $grow>
              <PanelTitle>ナビゲーター<CloseMark aria-label="閉じる">×</CloseMark></PanelTitle>
              <PanelBody>
                <Tree>
                  <TreeNode depth={1} link={0} icon="chartWindow" size={14} latin>XMTrading</TreeNode>
                  <TreeNode depth={3} toggle="-" icon="accounts">口座</TreeNode>
                  <TreeNode depth={22} toggle="-" icon="server" latin>XMTrading-Real 49</TreeNode>
                  <TreeNode depth={46} link={10} icon="user"><Redacted $w={90} /></TreeNode>
                  <TreeNode depth={3} toggle="+" icon="func">インディケータ</TreeNode>
                  <TreeNode depth={3} toggle="+" icon="advisor">エキスパートアドバイザ</TreeNode>
                  <TreeNode depth={3} toggle="+" icon="script">スクリプト</TreeNode>
                </Tree>
              </PanelBody>
              <TabStrip>
                <Tab $w={41} $active>全般</Tab>
                <Tab $w={66}>お気に入り</Tab>
              </TabStrip>
            </Panel>
          </Dock>

          <ChartArea>
            <Desktop>
              <ChartWindow name="EURUSD,H4" tone="red" sell={["1.21", "37", "1"]} buy={["1.21", "38", "7"]}>
                <Chart header="EURUSD,H4  1.21261 1.21380 1.21249 1.21371" gridTop={14.2} prices={EUR_PRICES} dates={EUR_DATES} current={{ y: 74, text: "1.21371" }}>
                  <CandleSeries />
                  <polyline points={EUR_MA.map(([x, y]) => `${x / 3 - 9},${y / 3 - 33}`).join(" ")} fill="none" stroke="#c80000" />
                </Chart>
              </ChartWindow>
              <ChartWindow name="GBPUSD,H4" tone="red" sell={["1.38", "99", "0"]} buy={["1.39", "01", "4"]}>
                <Chart header="GBPUSD,H4" gridTop={14.2} prices={[]} dates={["29 Dec 2020"]}>
                  <BarSeries bars={GBPUSD} />
                  <path d="M3 239c6 6 10 8 16 8s12-6 20-12" fill="none" stroke="#c80000" />
                </Chart>
              </ChartWindow>
              <ChartWindow name="USDCHF,H4" active tone="blue" sell={["0.89", "06", "5"]} buy={["0.89", "08", "7"]}>
                <Chart header="USDCHF,H4  0.89137 0.89150 0.89056 0.89065" gridTop={8.800} prices={["0.90500", "0.90000"]} dates={[]}>
                  <BarSeries bars={USDCHF.map(([x, hi, lo]) => [446 + x / 3, hi / 3 - 77, lo / 3 - 77])} />
                </Chart>
              </ChartWindow>
              <ChartWindow name="USDJPY,H4" tone="blue" sell={["105", "02", "4"]} buy={["105", "03", "9"]}>
                <Chart header="USDJPY,H4" gridTop={8.800} prices={[]} dates={[]} />
              </ChartWindow>
            </Desktop>
            <DocTabs>
              <Tab $w={77} $plain>EURUSD,H4</Tab>
              <Tab $w={77} $active>USDCHF,H4</Tab>
              <Tab $w={78}>GBPUSD,H4</Tab>
              <Tab $w={73}>USDJPY,H4</Tab>
              <DocScroll>
                <svg width="4" height="6"><path d="M4 0v6L0 3z" fill="#888" /></svg>
                <svg width="4" height="6"><path d="M0 0v6l4-3z" fill="#888" /></svg>
              </DocScroll>
            </DocTabs>
          </ChartArea>
        </Workspace>

        <Terminal>
          <Spine>
            <CloseMark aria-label="閉じる">×</CloseMark>
            <SpineTitle>ターミナル</SpineTitle>
          </Spine>
          <TerminalBody>
            <ListBox>
              <Articles>
                <colgroup><col /><col width={273} /><col width={74} /></colgroup>
                <thead>
                  <tr>
                    <th>名前</th>
                    <th>カテゴリ</th>
                    <th>日付<SortMark width="7" height="7"><path d="M0 .5h7M1 1l2.500 5" fill="none" stroke="#888" /></SortMark></th>
                  </tr>
                </thead>
                <tbody>
                  {ARTICLES.map(([title, cat]) => (
                    <tr key={title}>
                      <td><Doc><Icon name="doc" size={10} />{title}</Doc></td>
                      <td>{cat}</td>
                      <td>2021.02.08</td>
                    </tr>
                  ))}
                </tbody>
              </Articles>
              <ScrollBar thumb={16} />
            </ListBox>
            <TabStrip>
              {TERMINAL_TABS.map(([t, w]) => (
                <Tab key={t} $w={w} $active={t === "記事"} $plain={t === "シグナル"}>
                  {t}
                  {t === "メールボックス" && <Unread>7</Unread>}
                </Tab>
              ))}
            </TabStrip>
          </TerminalBody>
        </Terminal>

        <StatusBar>
          <StatusCell>F1キーでヘルプが表示されます</StatusCell>
          <StatusCell>Default</StatusCell>
          <StatusCell /><StatusCell /><StatusCell /><StatusCell /><StatusCell /><StatusCell />
          <StatusCell>
            <svg width="21" height="12" aria-hidden="true">
              <path d="M1.500 0v12M4.500 0v12M7.500 0v12M10.500 0v12M13.500 0v12M16.500 0v12M19.500 0v12" stroke="#5c8a1e" strokeWidth="2" />
              <path d="M1.500 10v2M4.500 9v3M7.500 8v4M10.500 6v6M13.500 5v7M16.500 3v9M19.500 2v10" stroke="#a8281c" strokeWidth="2" />
              <path d="M0 9.500L21 1" stroke="#f0f0f0" />
            </svg>
            479/5 kb
            <ResizeGrip width="12" height="12"><path d="M0 12L12 0M4 12l8-8M8 12l4-4" stroke="#999" /></ResizeGrip>
          </StatusCell>
        </StatusBar>
      </Frame>
    </>
  );
}
